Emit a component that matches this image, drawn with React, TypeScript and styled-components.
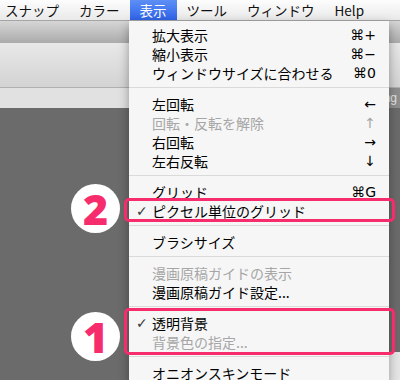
import { FunctionComponent } from 'react';
import styled, { createGlobalStyle } from 'styled-components';

const GlobalStyle = createGlobalStyle`
  html, body {
    margin: 0;
    padding: 0;
  }
  body {
    font-family: "Noto Sans CJK JP", "Noto Sans", sans-serif;
  }
`;

const Screen = styled.div`
  position: relative;
  width: 400px;
  height: 380px;
  overflow: hidden;
  display: flex;
  flex-direction: column;
  background: #6b6b6b;
`;

const MenuBar = styled.div`
  box-sizing: border-box;
  height: 21px;
  flex-shrink: 0;
  display: flex;
  background: linear-gradient(#fdfdfd, #e9e9e9);
  border-bottom: 1px solid #a5a5a5;
`;

const MenuTitles = styled.div`
  display: flex;
  margin-left: -5px;
`;

const MenuTitle = styled.div<{ $active?: boolean }>`
  padding: 0 10px;
  font-size: 13.5px;
  line-height: 20px;
  color: ${(p) => (p.$active ? '#fff' : '#111')};
  background: ${(p) => (p.$active ? 'linear-gradient(#5d8ff6, #2f63e8)' : 'transparent')};
`;

const TitleStrip = styled.div`
  height: 22px;
  flex-shrink: 0;
  background: linear-gradient(#d6d6d6, #ababab);
`;

const Toolbar = styled.div`
  box-sizing: border-box;
  height: 45px;
  flex-shrink: 0;
  background: linear-gradient(#e8e8e8, #d3d3d3);
  border-bottom: 1px solid #b0b0b0;
`;

const TabBar = styled.div`
  height: 20px;
  flex-shrink: 0;
  display: flex;
`;

const Tab = styled.div<{ $active?: boolean }>`
  flex: ${(p) => (p.$active ? 1 : '0 0 150px')};
  background: ${(p) => (p.$active ? '#e1e1e1' : '#8e8e8e')};
  color: #e6e6e6;
  font-family: "Liberation Sans", sans-serif;
  font-size: 12px;
  line-height: 20px;
  text-align: right;
  padding-right: 3px;
  white-space: nowrap;
  overflow: hidden;
`;

const Canvas = styled.div`
  flex: 1;
  display: flex;
  flex-direction: column;
  justify-content: flex-end;
  background: #6b6b6b;
`;

const StatusPanel = styled.div`
  height: 28px;
  margin-left: 220px;
  background: #e6e6e6;
`;

const Menu = styled.div`
  position: absolute;
  top: 21px;
  left: 129px;
  width: 260px;
  padding-top: 4px;
  background: #f6f6f6;
  box-shadow: 0 4px 10px rgba(0, 0, 0, 0.35);
`;

const Row = styled.div<{ $disabled?: boolean }>`
  height: 19px;
  display: flex;
  align-items: center;
  padding: 0 13px 0 7px;
  font-size: 14px;
  color: ${(p) => (p.$disabled ? '#a6a6a6' : '#000')};
`;

const Check = styled.span`
  width: 16px;
  font-family: "DejaVu Sans", sans-serif;
  font-size: 14px;
  font-weight: bold;
  color: #3a3a3a;
`;

const Label = styled.span`
  flex: 1;
  white-space: nowrap;
`;

const Shortcut = styled.span`
  font-family: "DejaVu Sans", sans-serif;
  font-size: 14px;
`;

const Separator = styled.div`
  height: 1px;
  margin: 5px 0 6px;
  background: #dadada;
`;

const Group = styled.div<{ $top: number; $bottom: number }>`
  position: relative;

  &::after {
    content: '';
    position: absolute;
    top: ${(p) => p.$top}px;
    bottom: ${(p) => p.$bottom}px;
    left: -5px;
    right: -6px;
    border: 3px solid #f62c6d;
    border-radius: 5px;
    pointer-events: none;
  }
`;

const Badge = styled.div<{ $top: number }>`
  position: absolute;
  left: -58px;
  top: ${(p) => p.$top}px;
  width: 49px;
  height: 49px;
  border-radius: 50%;
  background: #fff;
  display: flex;
  align-items: center;
  justify-content: center;
  font-family: "Noto Sans", "DejaVu Sans", sans-serif;
  font-weight: 900;
  font-size: 43px;
  line-height: 1;
  color: #f62c6d;
`;

interface IItem {
  label: string;
  shortcut?: string;
  disabled?: boolean;
  checked?: boolean;
}

const Item: FunctionComponent<IItem> = ({ label, shortcut, disabled, checked }) => (
  <Row $disabled={disabled}>
    <Check>{checked ? '✓' : ''}</Check>
    <Label>{label}</Label>
    {shortcut && <Shortcut>{shortcut}</Shortcut>}
  </Row>
);

const titles = ['スナップ', 'カラー', '表示', 'ツール', 'ウィンドウ', 'Help'];

const App: FunctionComponent = () => {
  return (
    <>
      <GlobalStyle />
      <Screen>
        <MenuBar>
          <MenuTitles>
            {titles.map((t) => (
              <MenuTitle key={t} $active={t === '表示'}>
                {t}
              </MenuTitle>
            ))}
          </MenuTitles>
        </MenuBar>
        <TitleStrip />
        <Toolbar />
        <TabBar>
          <Tab $active />
          <Tab>Drawing</Tab>
        </TabBar>
        <Canvas>
          <StatusPanel />
        </Canvas>

        <Menu>
          <Item label="拡大表示" shortcut="⌘+" />
          <Item label="縮小表示" shortcut="⌘−" />
          <Item label="ウィンドウサイズに合わせる" shortcut="⌘0" />
          <Separator />
          <Item label="左回転" shortcut="←" />
          <Item label="回転・反転を解除" shortcut="↑" disabled />
          <Item label="右回転" shortcut="→" />
          <Item label="左右反転" shortcut="↓" />
          <Separator />
          <Item label="グリッド" shortcut="⌘G" />
          <Group $top={-3} $bottom={-2}>
            <Badge $top={-17}>2</Badge>
            <Item label="ピクセル単位のグリッド" checked />
          </Group>
          <Separator />
          <Item label="ブラシサイズ" />
          <Separator />
          <Item label="漫画原稿ガイドの表示" disabled />
          <Item label="漫画原稿ガイド設定..." />
          <Separator />
          <Group $top={-5} $bottom={-4}>
            <Badge $top={-1}>1</Badge>
            <Item label="透明背景" checked />
            <Item label="背景色の指定..." disabled />
          </Group>
          <Separator />
          <Item label="オニオンスキンモード" />
        </Menu>
      </Screen>
    </>
  );
};

export default App;
